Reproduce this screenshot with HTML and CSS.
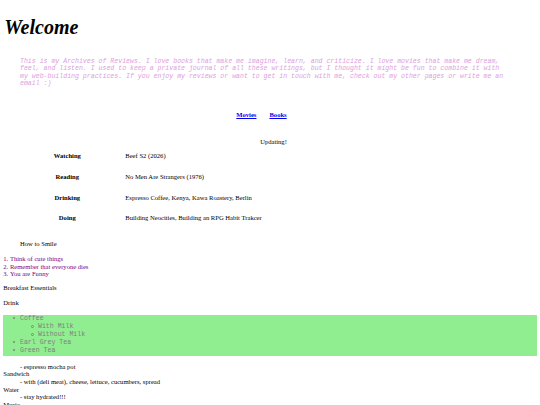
FILE: index.html
```html
<!DOCTYPE html>
<html>
<head>
<meta charset="utf-8">
<link rel="stylesheet" href="styles.css">
</head>
<body>
<h1 class="title">Welcome</h1>
<p class="intro">This is my Archives of Reviews. I love books that make me imagine, learn, and criticize. I love movies that make me dream, feel, and listen. I used to keep a private journal of all these writings, but I thought it might be fun to combine it with my web-building practices. If you enjoy my reviews or want to get in touch with me, check out my other pages or write me an email :)</p>
<nav class="links"><a href="#">Movies</a><a href="#">Books</a></nav>
<div class="updating">Updating!</div>
<div class="status">
  <div class="label">Watching</div><div class="value">Beef S2 (2026)</div>
  <div class="label">Reading</div><div class="value">No Men Are Strangers (1976)</div>
  <div class="label">Drinking</div><div class="value">Espresso Coffee, Kenya, Kawa Roastery, Berlin</div>
  <div class="label">Doing</div><div class="value">Building Neocities, Building an RPG Habit Trakcer</div>
</div>
<div class="smile-title">How to Smile</div>
<ol class="smile">
  <li>Think of cute things</li>
  <li>Remember that everyone dies</li>
  <li>You are Funny</li>
</ol>
<div class="heading">Breakfast Essentials</div>
<div class="heading drink">Drink</div>
<ul class="drinks">
  <li>Coffee
    <ul class="sub">
      <li>With Milk</li>
      <li>Without Milk</li>
    </ul>
  </li>
  <li>Earl Grey Tea</li>
  <li>Green Tea</li>
</ul>
<div class="notes">
  <div class="indent">- espresso mocha pot</div>
  <div>Sandwich</div>
  <div class="indent">- with (deli meat), cheese, lettuce, cucumbers, spread</div>
  <div>Water</div>
  <div class="indent">- stay hydrated!!!</div>
  <div>Music</div>
</div>
</body>
</html>
```
FILE: styles.css
```css
html, body {
  background: #ffffff;
}
body {
  margin: 0 3.3px;
  font-family: "Liberation Serif", "Times New Roman", serif;
  font-size: 6.6px;
  line-height: 7.5px;
  color: #000000;
}
.title {
  margin: 15.5px 0 0 1px;
  font-size: 20px;
  line-height: 23px;
  font-style: italic;
  font-weight: bold;
}
.intro {
  margin: 19.5px 26px 0 16.7px;
  font-family: "Liberation Mono", "Courier New", monospace;
  font-size: 6.55px;
  line-height: 7.4px;
  font-style: italic;
  color: #dda0dd;
}
.links {
  display: flex;
  justify-content: center;
  gap: 13px;
  margin-top: 23.7px;
  padding-right: 17px;
  font-weight: bold;
}
.links a {
  color: #0000ee;
  text-decoration: underline;
}
.updating {
  margin-top: 19.5px;
  text-align: center;
  padding-left: 7px;
}
.status {
  display: grid;
  grid-template-columns: 104px 1fr;
  column-gap: 6px;
  padding-left: 12px;
  grid-auto-rows: 20.6px;
  align-items: center;
}
.label {
  font-weight: bold;
  text-align: center;
}
.smile-title {
  margin-top: 12px;
  padding-left: 16.7px;
}
.smile {
  margin: 7.5px 0 0 0;
  padding: 0;
  list-style-position: inside;
  color: #800080;
}
.heading {
  margin-top: 6.5px;
}
.heading.drink {
  margin-top: 7.5px;
}
.drinks {
  margin: 8px 0 0 0;
  padding: 0.8px 0 1.2px 16.7px;
  background: #90ee90;
  font-family: "Liberation Mono", "Courier New", monospace;
  font-size: 6.55px;
  line-height: 7.8px;
  color: #808080;
  list-style: none;
}
.drinks li::before {
  content: "";
  display: inline-block;
  box-sizing: border-box;
  width: 2px;
  height: 2px;
  border-radius: 50%;
  background: currentColor;
  margin-left: -6.5px;
  margin-right: 4.5px;
  vertical-align: 1px;
}
.sub {
  margin: 0;
  padding-left: 18px;
  list-style: none;
}
.drinks .sub li::before {
  width: 3px;
  height: 3px;
  background: transparent;
  border: 0.8px solid currentColor;
  margin-left: -6.5px;
  margin-right: 3.5px;
  vertical-align: 0.5px;
}
.notes {
  margin-top: 7.2px;
  line-height: 7.6px;
}
.indent {
  padding-left: 16.7px;
}
```
